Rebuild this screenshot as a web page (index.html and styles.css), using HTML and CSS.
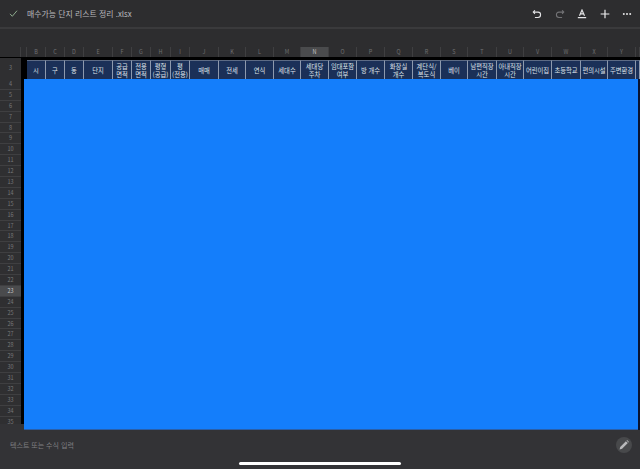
FILE: index.html
```html
<!DOCTYPE html>
<html lang="ko">
    <head>
        <meta charset="utf-8">
        <title>매수가능 단지 리스트 정리 .xlsx</title>
        <link rel="stylesheet" href="styles.css">
    </head>
    <body>
        <div class="page">
            <header class="topBar">
                <div class="titleCont">
                    <svg class="check" width="9" height="7" viewBox="0 0 12 10"><path d="M1 5.5 L4.3 9 L11 1" fill="none" stroke="#8fae8f" stroke-width="1.4"/></svg>
                    <p class="title">매수가능 단지 리스트 정리 .xlsx</p>
                </div>
                <div class="tools">
                    <svg class="tool" width="10" height="10" viewBox="0 0 12 12"><path d="M3.5 1.5 L1.5 3.7 L3.5 5.8 M1.8 3.7 H7.2 C9.2 3.7 10.3 5.2 10.3 7 C10.3 8.8 9 10.2 7.2 10.2 H3.5" fill="none" stroke="#e4e4e6" stroke-width="1.3"/></svg>
                    <svg class="tool" width="10" height="10" viewBox="0 0 12 12"><path d="M8.5 1.5 L10.5 3.7 L8.5 5.8 M10.2 3.7 H4.8 C2.8 3.7 1.7 5.2 1.7 7 C1.7 8.8 3 10.2 4.8 10.2 H8.5" fill="none" stroke="#737376" stroke-width="1.3"/></svg>
                    <svg class="tool" width="10" height="10" viewBox="0 0 12 12"><path d="M3 8 L6 1.2 L9 8 M4.1 5.8 H7.9" fill="none" stroke="#e4e4e6" stroke-width="1.4"/><rect x="1" y="9.6" width="10" height="1.5" fill="#e4e4e6"/></svg>
                    <svg class="tool" width="10" height="10" viewBox="0 0 12 12"><path d="M6 0.8 V11.2 M0.8 6 H11.2" stroke="#f0f0f2" stroke-width="1.4"/></svg>
                    <svg class="tool" width="10" height="10" viewBox="0 0 12 12"><circle cx="2.2" cy="6" r="1.2" fill="#e4e4e6"/><circle cx="6" cy="6" r="1.2" fill="#e4e4e6"/><circle cx="9.8" cy="6" r="1.2" fill="#e4e4e6"/></svg>
                </div>
            </header>
            <div class="subBar"></div>

            <div class="cols letters">
                <span></span><span></span>
                <span>B</span><span>C</span><span>D</span><span>E</span><span>F</span><span>G</span><span>H</span><span>I</span><span>J</span>
                <span>K</span><span>L</span><span>M</span><span class="active">N</span><span>O</span><span>P</span><span>Q</span><span>R</span>
                <span>S</span><span>T</span><span>U</span><span>V</span><span>W</span><span>X</span><span>Y</span><span></span>
            </div>

            <div class="cols headRow">
                <span class="rowNum">3</span><span class="gap"></span>
                <span class="cell">시</span><span class="cell">구</span><span class="cell">동</span><span class="cell">단지</span>
                <span class="cell">공급<br>면적</span><span class="cell">전용<br>면적</span><span class="cell">평형<br>(공급)</span><span class="cell">평<br>(전용)</span>
                <span class="cell">매매</span><span class="cell">전세</span><span class="cell">연식</span><span class="cell">세대수</span>
                <span class="cell">세대당<br>주차</span><span class="cell">임대포함<br>여부</span><span class="cell">방 개수</span><span class="cell">화장실<br>개수</span>
                <span class="cell">계단식/<br>복도식</span><span class="cell">베이</span><span class="cell">남편직장<br>시간</span><span class="cell">아내직장<br>시간</span>
                <span class="cell">어린이집</span><span class="cell">초등학교</span><span class="cell">편의시설</span><span class="cell">주변환경</span>
                <span class="cell"></span>
            </div>

            <div class="sheetBody">
                <div class="rowNums">
                    <span>4</span><span>5</span><span>6</span><span>7</span><span>8</span><span>9</span><span>10</span><span>11</span>
                    <span>12</span><span>13</span><span>14</span><span>15</span><span>16</span><span>17</span><span>18</span><span>19</span>
                    <span>20</span><span>21</span><span>22</span><span class="active">23</span><span>24</span><span>25</span><span>26</span><span>27</span>
                    <span>28</span><span>29</span><span>30</span><span>31</span><span>32</span><span>33</span><span>34</span><span class="last">35</span>
                </div>
                <div class="selection"></div>
                <div class="edge"></div>
            </div>

            <footer class="formulaBar">
                <p class="formulaTxt">텍스트 또는 수식 입력</p>
                <div class="editBtn">
                    <svg width="10" height="10" viewBox="0 0 10 10"><path d="M0.6 9.4 L1.2 6.9 L6.9 1.2 L8.8 3.1 L3.1 8.8 Z" fill="#b9b9bb"/><path d="M7.5 0.6 L8.1 0 L10 1.9 L9.4 2.5 Z" fill="#b9b9bb"/></svg>
                </div>
                <div class="homeBar"></div>
            </footer>
        </div>
    </body>
</html>
```

FILE: styles.css
```css
* {
    margin: 0;
    padding: 0;
    box-sizing: border-box;
}

body {
    width: 640px;
    height: 469px;
    background-color: #2d2d2f;
    font-family: 'Noto Sans CJK KR', 'Noto Sans', sans-serif;
    overflow: hidden;
}

.page {
    width: 640px;
    height: 469px;
    display: flex;
    flex-flow: column nowrap;
}

.topBar {
    height: 29px;
    padding: 0 8px 0 9px;
    border-bottom: 2px solid #3a3a3c;
    display: flex;
    justify-content: space-between;
    align-items: center;
}
.titleCont {
    display: flex;
    align-items: center;
}
.title {
    margin-left: 9px;
    font-size: 7.9px;
    color: #b9b9bc;
}
.tools {
    display: flex;
    gap: 12.5px;
}

.subBar {
    height: 18px;
}

.cols {
    display: grid;
    grid-template-columns: 21px 6px 19px 19px 19px 29px 19px 19px 20px 19px 29px 27px 28px 27px 28px 28px 28px 28px 28px 27px 29px 27px 28px 29px 27px 28px 4px;
}

.letters {
    height: 10px;
    background-color: #2d2d2f;
}
.letters span {
    border-right: 1px solid #3f3f41;
    font-size: 5.5px;
    line-height: 10px;
    text-align: center;
    color: #6f7072;
}
.letters .active {
    background-color: #4a4b4d;
    color: #c4c4c6;
}

.headRow {
    height: 22px;
    padding-top: 3px;
    background-color: #000;
}
.rowNum {
    margin-top: -2px;
    background-color: #2f2f31;
    border-bottom: 1px solid #3f3f41;
    font-size: 5.5px;
    line-height: 21px;
    text-align: center;
    color: #77787a;
}
.cell {
    display: flex;
    justify-content: center;
    align-items: center;
    background-color: #1b3058;
    border-right: 1px solid #8d99ad;
    border-top: 1px solid #5d6b85;
    font-size: 6.3px;
    line-height: 8px;
    text-align: center;
    color: #dfe2e8;
}

.sheetBody {
    flex: 1;
    display: flex;
    align-items: flex-start;
    background-color: #333336;
}
.rowNums {
    width: 24px;
    height: 345px;
    border-right: 3px solid #000;
    background-color: #2f2f31;
}
.rowNums span {
    display: block;
    height: 10.9px;
    border-bottom: 1px solid #3f3f41;
    font-size: 5.5px;
    line-height: 10px;
    text-align: center;
    color: #77787a;
}
.rowNums .active {
    background-color: #4a4b4d;
    color: #c4c4c6;
}
.rowNums .last {
    border-bottom: none;
}
.selection {
    flex: 1;
    height: 351px;
    background-color: #147efb;
    border-bottom: 1px solid #2a5fa8;
}
.edge {
    width: 2px;
    height: 351px;
    background-color: #0a1430;
}

.formulaBar {
    position: relative;
    height: 39px;
    padding: 9px 8px 0 10px;
    display: flex;
    justify-content: space-between;
    align-items: flex-start;
    background-color: #333336;
}
.formulaTxt {
    padding-top: 1px;
    font-size: 7px;
    line-height: 11px;
    color: #7f7f82;
}
.editBtn {
    width: 16px;
    height: 16px;
    margin-top: -2px;
    border-radius: 50%;
    background-color: #48494b;
    display: flex;
    justify-content: center;
    align-items: center;
}
.homeBar {
    position: absolute;
    left: 239px;
    top: 32px;
    width: 162px;
    height: 3px;
    border-radius: 2px;
    background-color: #fff;
}
```
